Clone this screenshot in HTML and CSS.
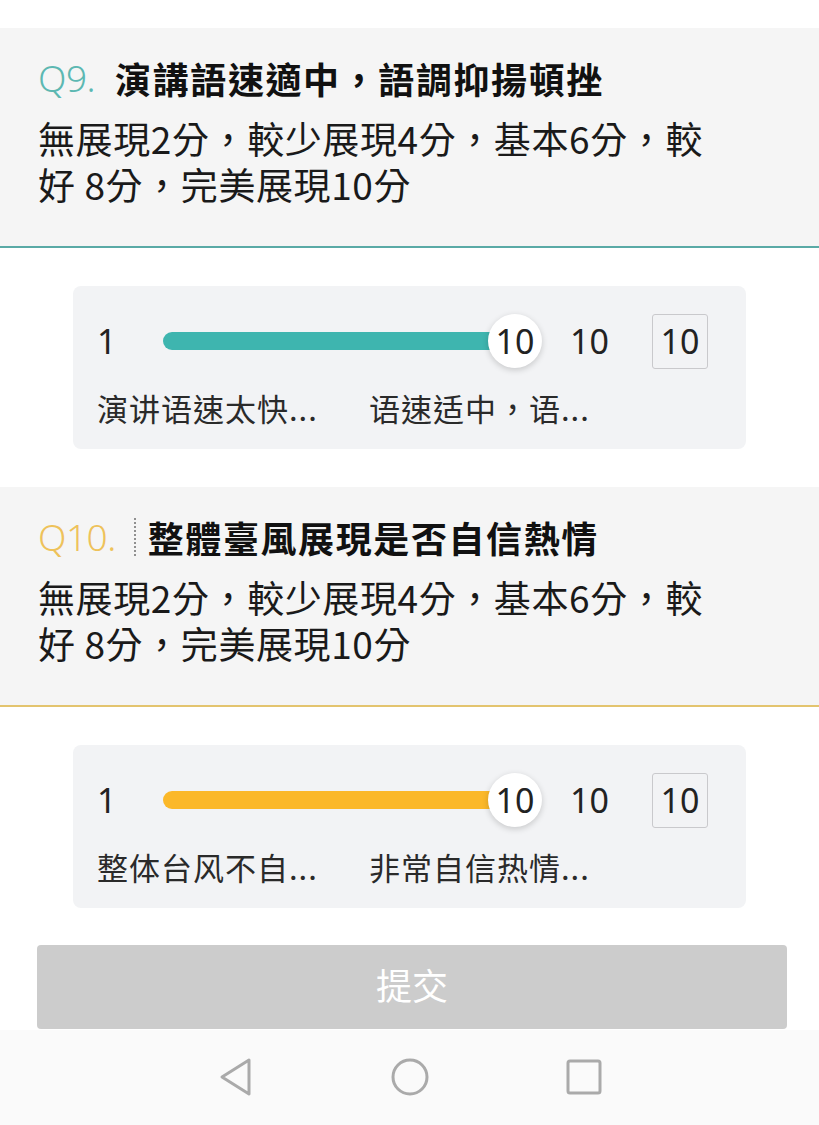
FILE: index.html
```html
<!DOCTYPE html>
<html lang="zh-Hant">
<head>
<meta charset="utf-8">
<link rel="stylesheet" href="styles.css">
</head>
<body>
<div class="page">
  <div class="top-gap"></div>

  <section class="question q-teal">
    <div class="q-title">
      <span class="q-num">Q9.</span>
      <span class="q-text">演講語速適中，語調抑揚頓挫</span>
    </div>
    <p class="q-desc">無展現2分，較少展現4分，基本6分，較好 8分，完美展現10分</p>
  </section>

  <div class="card">
    <div class="slider-row">
      <span class="min">1</span>
      <div class="track">
        <div class="fill fill-teal"></div>
        <div class="thumb">10</div>
      </div>
      <span class="max">10</span>
      <span class="box">10</span>
    </div>
    <div class="labels">
      <span class="label">演讲语速太快...</span>
      <span class="label">语速适中，语...</span>
    </div>
  </div>

  <section class="question q-gold">
    <div class="q-title">
      <span class="q-num">Q10.</span>
      <span class="dots"></span>
      <span class="q-text">整體臺風展現是否自信熱情</span>
    </div>
    <p class="q-desc">無展現2分，較少展現4分，基本6分，較好 8分，完美展現10分</p>
  </section>

  <div class="card">
    <div class="slider-row">
      <span class="min">1</span>
      <div class="track">
        <div class="fill fill-gold"></div>
        <div class="thumb">10</div>
      </div>
      <span class="max">10</span>
      <span class="box">10</span>
    </div>
    <div class="labels">
      <span class="label">整体台风不自...</span>
      <span class="label">非常自信热情...</span>
    </div>
  </div>

  <div class="submit-wrap">
    <button class="submit">提交</button>
  </div>

  <nav class="navbar">
    <svg class="nav-icon" width="36" height="40" viewBox="0 0 36 40">
      <path d="M31 3 L4 20 L31 37 Z" fill="none" stroke="#aaaaaa" stroke-width="3" stroke-linejoin="round"/>
    </svg>
    <svg class="nav-icon" width="40" height="40" viewBox="0 0 40 40">
      <circle cx="20" cy="20" r="17" fill="none" stroke="#aaaaaa" stroke-width="3"/>
    </svg>
    <svg class="nav-icon" width="36" height="36" viewBox="0 0 36 36">
      <rect x="2" y="2" width="32" height="32" rx="2" fill="none" stroke="#aaaaaa" stroke-width="3"/>
    </svg>
  </nav>
</div>
</body>
</html>
```

FILE: styles.css
```css
* { box-sizing: border-box; }
html, body { margin: 0; padding: 0; }
body {
  background: #ffffff;
  font-family: "Noto Sans CJK TC", "Noto Sans", sans-serif;
  color: #1f1f1f;
  width: 819px;
  overflow: hidden;
}
.page { width: 819px; height: 1125px; display: flex; flex-direction: column; }
.top-gap { height: 28px; flex: none; }

.question {
  flex: none;
  background: #f5f5f5;
  height: 220px;
  padding: 26px 100px 0 38px;
}
.q-teal { border-bottom: 2px solid #5aaaa6; }
.q-gold { border-bottom: 2px solid #e3c46e; }

.q-title {
  display: flex;
  align-items: center;
  height: 48px;
}
.q-num {
  font-family: "Noto Sans", sans-serif;
  font-weight: 300;
  font-size: 37px;
  line-height: 48px;
  margin-right: 20px;
  letter-spacing: -0.5px;
}
.q-teal .q-num { color: #5cb8b2; }
.q-gold .q-num { color: #eec25a; margin-right: 18px; }
.dots {
  width: 0;
  height: 38px;
  border-left: 2px dotted #666;
  margin-right: 12px;
  opacity: 0.7;
}
.q-text {
  font-weight: 700;
  font-size: 36px;
  line-height: 48px;
  color: #111;
  letter-spacing: 1.6px;
}
.q-desc {
  margin: 13px 0 0 0;
  font-size: 37px;
  line-height: 46px;
  color: #1a1a1a;
  letter-spacing: 0.6px;
}

.card {
  flex: none;
  margin: 38px 73px 38px 73px;
  height: 163px;
  background: #f2f3f5;
  border-radius: 8px;
  padding: 20px 36px 0 24px;
}
.slider-row {
  display: flex;
  align-items: center;
  height: 70px;
  font-family: "Noto Sans", sans-serif;
  font-size: 34px;
  color: #222;
}
.min { width: 66px; }
.track {
  position: relative;
  width: 352px;
  height: 18px;
}
.fill {
  height: 18px;
  width: 100%;
  border-radius: 9px;
}
.fill-teal { background: #3eb5af; }
.fill-gold { background: #fbb829; }
.thumb {
  position: absolute;
  right: -27px;
  top: -18px;
  width: 54px;
  height: 54px;
  border-radius: 50%;
  background: #fff;
  box-shadow: 0 2px 6px rgba(0,0,0,0.18);
  display: flex;
  align-items: center;
  justify-content: center;
  font-size: 34px;
  color: #222;
}
.max { margin-left: 55px; }
.box {
  margin-left: 43px;
  width: 56px;
  height: 55px;
  border: 1.5px solid #c9c9cc;
  border-radius: 3px;
  display: flex;
  align-items: center;
  justify-content: center;
}
.labels {
  display: flex;
  margin-top: 12px;
}
.label {
  width: 272px;
  font-family: "Noto Sans CJK SC", "Noto Sans", sans-serif;
  font-size: 31px;
  line-height: 40px;
  color: #2a2a2a;
  white-space: nowrap;
  letter-spacing: 1px;
}

.submit-wrap {
  flex: none;
  padding: 0 32px 0 37px;
  margin-top: -1px;
}
.submit {
  width: 100%;
  height: 84px;
  border: none;
  border-radius: 4px;
  background: #cccccc;
  color: #ffffff;
  font-family: "Noto Sans CJK SC", sans-serif;
  font-size: 36px;
  padding: 0 0 6px 0;
}

.navbar {
  flex: 1;
  margin-top: 1px;
  background: #fafafa;
  display: flex;
  align-items: center;
  justify-content: center;
  gap: 136px;
  padding-bottom: 2px;
}
.nav-icon { display: block; }
```
